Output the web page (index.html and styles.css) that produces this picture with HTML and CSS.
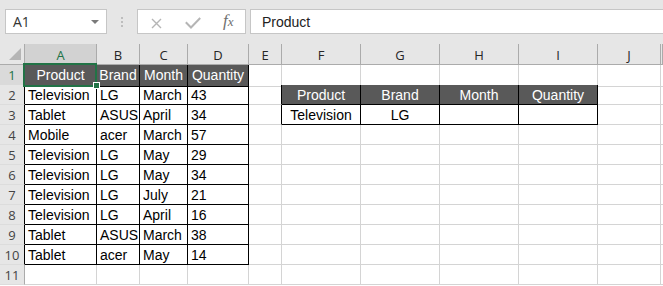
FILE: index.html
```html
<!DOCTYPE html>
<html lang="en">
<head>
    <meta charset="UTF-8">
    <title>Book1 - Excel</title>
    <link rel="stylesheet" href="styles.css">
</head>
<body>
    <!-- Name box + formula bar -->
    <div class="formula-bar">
        <div class="namebox">A1<span class="drop"></span></div>
        <svg class="grip" width="2" height="10" viewBox="0 0 2 10">
            <rect x="0" y="0" width="2" height="2" fill="#bdbdbd"/>
            <rect x="0" y="4" width="2" height="2" fill="#bdbdbd"/>
            <rect x="0" y="8" width="2" height="2" fill="#bdbdbd"/>
        </svg>
        <div class="fx-buttons">
            <svg class="cancel" width="11" height="11" viewBox="0 0 11 11">
                <path d="M1 1L10 10M10 1L1 10" stroke="#b5b5b5" stroke-width="1.4" fill="none"/>
            </svg>
            <svg class="enter" width="16" height="12" viewBox="0 0 16 12">
                <path d="M0.8 5.2L6 10.5L15.2 1" stroke="#b5b5b5" stroke-width="2" fill="none"/>
            </svg>
            <span class="fx"><i>f</i><i class="x">x</i></span>
        </div>
        <div class="formula-input">Product</div>
    </div>

    <!-- Sheet grid -->
    <div class="sheet">
        <div class="row col-heads">
            <div class="c h corner"></div>
            <div class="c h sel">A</div>
            <div class="c h">B</div>
            <div class="c h">C</div>
            <div class="c h">D</div>
            <div class="c h">E</div>
            <div class="c h">F</div>
            <div class="c h">G</div>
            <div class="c h">H</div>
            <div class="c h">I</div>
            <div class="c h">J</div>
            <div class="c h"></div>
        </div>
        <div class="row">
            <div class="c rh sel-row kr">1</div>
            <div class="c k hd active">Product</div>
            <div class="c k hd">Brand</div>
            <div class="c k hd">Month</div>
            <div class="c k hd">Quantity</div>
            <div class="c"></div>
            <div class="c kb"></div>
            <div class="c kb"></div>
            <div class="c kb"></div>
            <div class="c kb"></div>
            <div class="c"></div>
            <div class="c"></div>
        </div>
        <div class="row">
            <div class="c rh kr">2</div>
            <div class="c k">Television</div>
            <div class="c k">LG</div>
            <div class="c k">March</div>
            <div class="c k">43</div>
            <div class="c kr"></div>
            <div class="c k hd">Product</div>
            <div class="c k hd">Brand</div>
            <div class="c k hd">Month</div>
            <div class="c k hd">Quantity</div>
            <div class="c"></div>
            <div class="c"></div>
        </div>
        <div class="row">
            <div class="c rh kr">3</div>
            <div class="c k">Tablet</div>
            <div class="c k">ASUS</div>
            <div class="c k">April</div>
            <div class="c k">34</div>
            <div class="c kr"></div>
            <div class="c k mid">Television</div>
            <div class="c k mid">LG</div>
            <div class="c k"></div>
            <div class="c k"></div>
            <div class="c"></div>
            <div class="c"></div>
        </div>
        <div class="row">
            <div class="c rh kr">4</div>
            <div class="c k">Mobile</div>
            <div class="c k">acer</div>
            <div class="c k">March</div>
            <div class="c k">57</div>
            <div class="c"></div>
            <div class="c"></div>
            <div class="c"></div>
            <div class="c"></div>
            <div class="c"></div>
            <div class="c"></div>
            <div class="c"></div>
        </div>
        <div class="row">
            <div class="c rh kr">5</div>
            <div class="c k">Television</div>
            <div class="c k">LG</div>
            <div class="c k">May</div>
            <div class="c k">29</div>
            <div class="c"></div>
            <div class="c"></div>
            <div class="c"></div>
            <div class="c"></div>
            <div class="c"></div>
            <div class="c"></div>
            <div class="c"></div>
        </div>
        <div class="row">
            <div class="c rh kr">6</div>
            <div class="c k">Television</div>
            <div class="c k">LG</div>
            <div class="c k">May</div>
            <div class="c k">34</div>
            <div class="c"></div>
            <div class="c"></div>
            <div class="c"></div>
            <div class="c"></div>
            <div class="c"></div>
            <div class="c"></div>
            <div class="c"></div>
        </div>
        <div class="row">
            <div class="c rh kr">7</div>
            <div class="c k">Television</div>
            <div class="c k">LG</div>
            <div class="c k">July</div>
            <div class="c k">21</div>
            <div class="c"></div>
            <div class="c"></div>
            <div class="c"></div>
            <div class="c"></div>
            <div class="c"></div>
            <div class="c"></div>
            <div class="c"></div>
        </div>
        <div class="row">
            <div class="c rh kr">8</div>
            <div class="c k">Television</div>
            <div class="c k">LG</div>
            <div class="c k">April</div>
            <div class="c k">16</div>
            <div class="c"></div>
            <div class="c"></div>
            <div class="c"></div>
            <div class="c"></div>
            <div class="c"></div>
            <div class="c"></div>
            <div class="c"></div>
        </div>
        <div class="row">
            <div class="c rh kr">9</div>
            <div class="c k">Tablet</div>
            <div class="c k">ASUS</div>
            <div class="c k">March</div>
            <div class="c k">38</div>
            <div class="c"></div>
            <div class="c"></div>
            <div class="c"></div>
            <div class="c"></div>
            <div class="c"></div>
            <div class="c"></div>
            <div class="c"></div>
        </div>
        <div class="row">
            <div class="c rh kr">10</div>
            <div class="c k">Tablet</div>
            <div class="c k">acer</div>
            <div class="c k">May</div>
            <div class="c k">14</div>
            <div class="c"></div>
            <div class="c"></div>
            <div class="c"></div>
            <div class="c"></div>
            <div class="c"></div>
            <div class="c"></div>
            <div class="c"></div>
        </div>
        <div class="row">
            <div class="c rh">11</div>
            <div class="c"></div>
            <div class="c"></div>
            <div class="c"></div>
            <div class="c"></div>
            <div class="c"></div>
            <div class="c"></div>
            <div class="c"></div>
            <div class="c"></div>
            <div class="c"></div>
            <div class="c"></div>
            <div class="c"></div>
        </div>
    </div>
</body>
</html>
```

FILE: styles.css
```css
body {
    margin: 0;
    width: 663px;
    height: 286px;
    overflow: hidden;
    background-color: #fff;
    font-family: "Liberation Sans", Arial, sans-serif;
}

/* formula bar */
.formula-bar {
    display: flex;
    align-items: flex-start;
    box-sizing: border-box;
    height: 44px;
    padding: 9px 0 0 5px;
    background-color: #e6e6e6;
}
.namebox {
    display: flex;
    align-items: center;
    box-sizing: border-box;
    width: 102px;
    height: 25px;
    padding-left: 7px;
    border: 1px solid #c6c6c6;
    background-color: #fff;
    font-family: "Open Sans", sans-serif;
    font-size: 14px;
    color: #333;
}
.drop {
    margin-left: auto;
    margin-right: 7px;
    width: 0;
    height: 0;
    border-left: 4px solid transparent;
    border-right: 4px solid transparent;
    border-top: 4px solid #7a7a7a;
}
.grip {
    margin: 8px 14px 0 14px;
}
.fx-buttons {
    display: flex;
    align-items: flex-start;
    box-sizing: border-box;
    width: 109px;
    height: 25px;
    padding-left: 13px;
    border: 1px solid #c6c6c6;
    background-color: #fff;
}
.cancel {
    margin-top: 8px;
}
.enter {
    margin: 7px 0 0 23px;
}
.fx {
    margin: 1px 0 0 22px;
    font-family: "Liberation Serif", serif;
    font-size: 17px;
    color: #6f6f6f;
}
.fx .x {
    font-size: 13px;
}
.formula-input {
    flex: 1;
    box-sizing: border-box;
    height: 25px;
    margin-left: 4px;
    padding: 1px 0 0 11px;
    border: 1px solid #c6c6c6;
    border-right: none;
    background-color: #fff;
    font-size: 14px;
    line-height: 23px;
    color: #222;
}

/* grid */
.row {
    display: grid;
    grid-template-columns: 25px 72px 43px 48px 61px 33px 79px 79px 79px 79px 63px 1fr;
    height: 20px;
}
.row.col-heads {
    height: 21px;
}
.c {
    box-sizing: border-box;
    padding: 0 3px;
    border-right: 1px solid #d4d4d4;
    border-bottom: 1px solid #d4d4d4;
    font-size: 14px;
    line-height: 21px;
    color: #000;
    white-space: nowrap;
    overflow: hidden;
}
.h {
    position: relative;
    padding: 0;
    border-right-color: #ababab;
    border-bottom-color: #ababab;
    background-color: #e6e6e6;
    font-family: "Open Sans", sans-serif;
    font-size: 13px;
    line-height: 22px;
    text-align: center;
    color: #262626;
}
.h.sel {
    background-color: #d2d2d2;
    color: #217346;
}
.corner::after {
    content: "";
    position: absolute;
    right: 3px;
    bottom: 4px;
    width: 0;
    height: 0;
    border-left: 12px solid transparent;
    border-bottom: 12px solid #b5b5b5;
}
.rh {
    padding: 0;
    border-right-color: #ababab;
    border-bottom-color: #dcdcdc;
    background-color: #e6e6e6;
    font-family: "Open Sans", sans-serif;
    font-size: 13px;
    line-height: 20px;
    text-align: center;
    color: #444;
}
.rh.sel-row {
    background-color: #dadada;
    color: #217346;
}
.k {
    border-right-color: #000;
    border-bottom-color: #000;
}
.kr {
    border-right-color: #000;
}
.kb {
    border-bottom-color: #000;
}
.hd {
    background-color: #595959;
    color: #fff;
    text-align: center;
    padding: 0;
}
.mid {
    text-align: center;
}

/* active cell A1 */
.active {
    position: relative;
    overflow: visible;
    z-index: 1;
}
.active::after {
    content: "";
    position: absolute;
    left: -2px;
    top: -2px;
    right: -1px;
    bottom: -1px;
    border: 2px solid #217346;
}
.active::before {
    content: "";
    position: absolute;
    right: -4px;
    bottom: -3px;
    width: 5px;
    height: 5px;
    border: 1px solid #fff;
    background-color: #217346;
    z-index: 2;
}
```
